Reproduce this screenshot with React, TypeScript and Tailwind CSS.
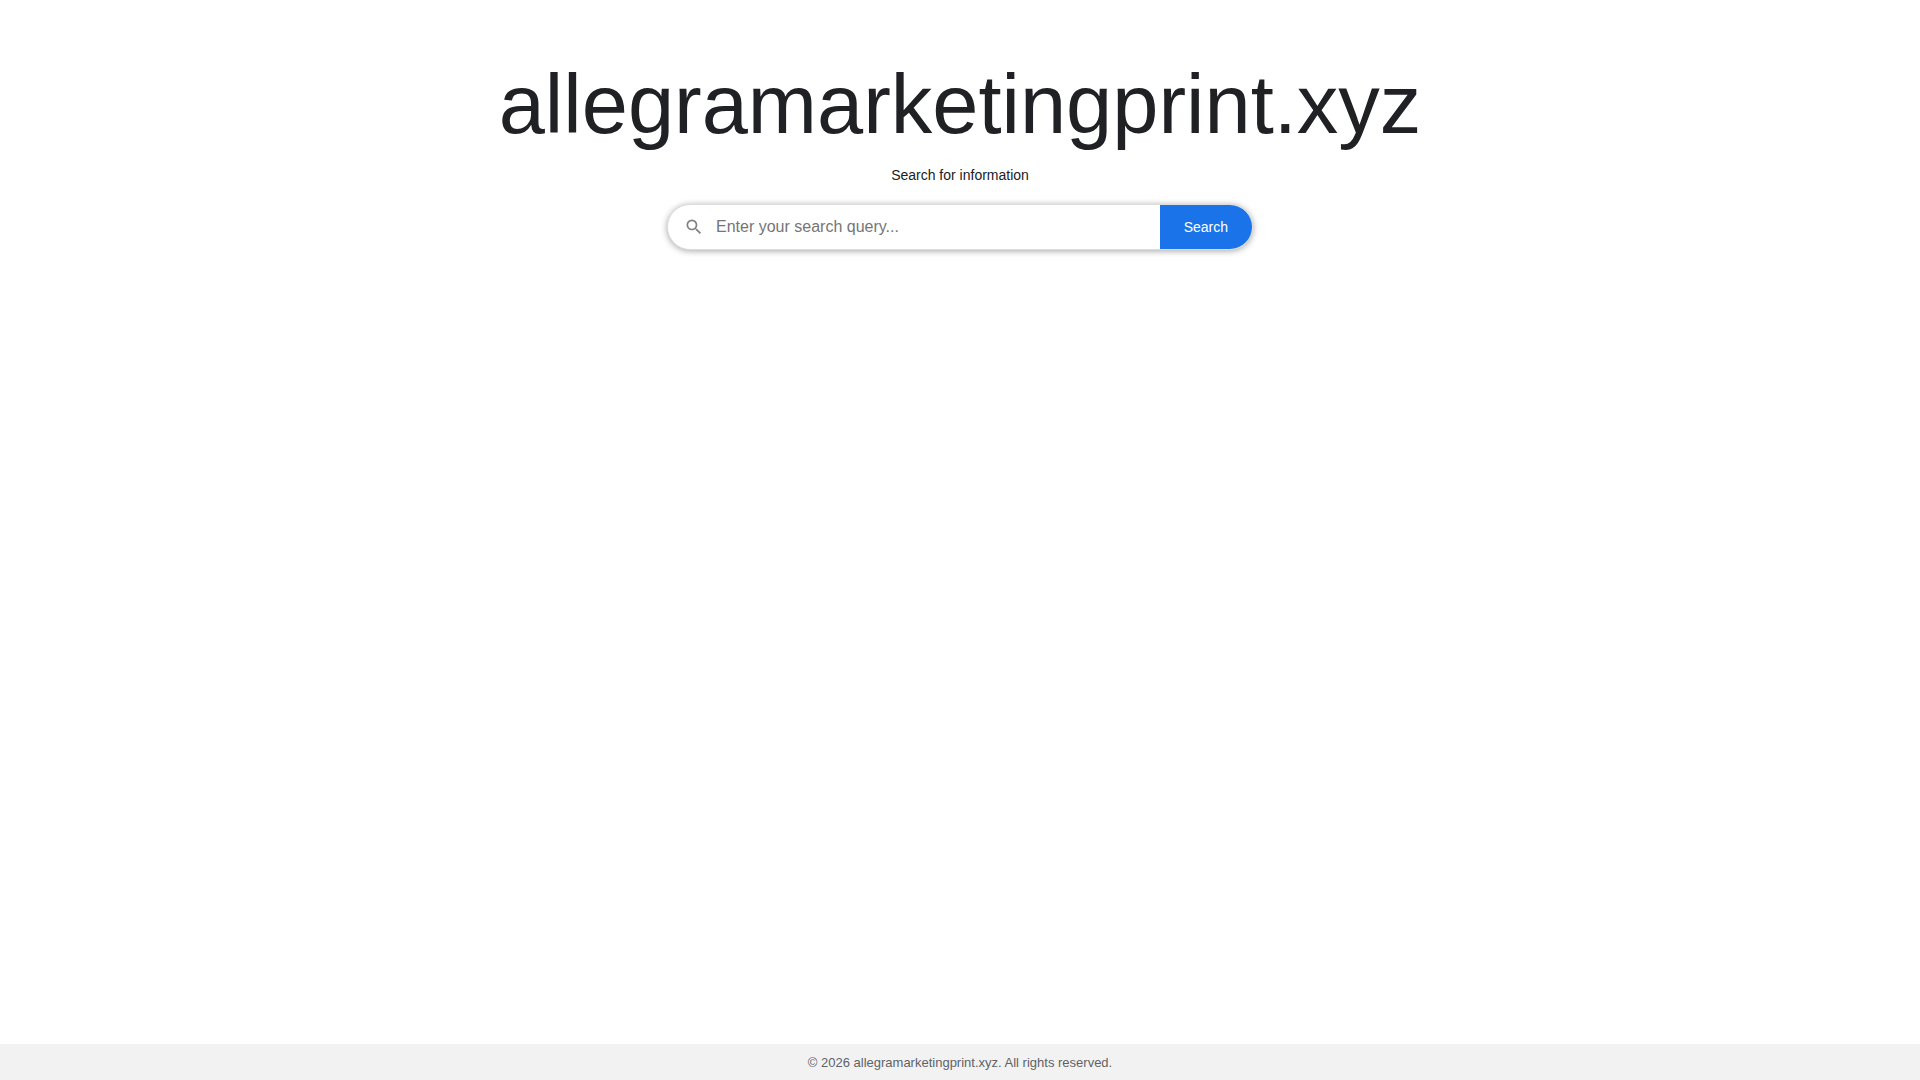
import React, { useState } from 'react';

const SITE_NAME = 'allegramarketingprint.xyz';

const SearchIcon = () => <svg className="w-5 h-5 shrink-0" viewBox="0 0 24 24" fill="#808080" aria-hidden="true">
    <path d="M15.5 14h-.79l-.28-.27A6.471 6.471 0 0 0 16 9.5 6.5 6.5 0 1 0 9.5 16c1.61 0 3.09-.59 4.23-1.57l.27.28v.79l5 4.99L20.49 19l-4.99-5zm-6 0C7.01 14 5 11.99 5 9.5S7.01 5 9.5 5 14 7.01 14 9.5 11.99 14 9.5 14z" />
  </svg>;

const SearchForm = () => {
  const [query, setQuery] = useState('');
  return <form role="search" onSubmit={e => e.preventDefault()} className="flex items-stretch w-full max-w-[586px] h-[46px] bg-white border border-[#dddddd] rounded-full shadow-[0_1px_6px_rgba(32,33,36,0.4)]">
      <label htmlFor="query" className="flex items-center pl-4 pr-3">
        <SearchIcon />
      </label>
      <input id="query" type="text" aria-label="Search query" value={query} onChange={e => setQuery(e.target.value)} placeholder="Enter your search query..." className="flex-1 min-w-0 text-base text-[#202124] placeholder:text-[#757575] outline-none" />
      <button type="submit" className="px-6 text-sm text-white bg-[#1a73e8] hover:bg-[#1765cc] rounded-r-full cursor-pointer">
        Search
      </button>
    </form>;
};

const App = () => {
  return <div className="flex flex-col min-h-screen bg-white text-[#202124] font-['Liberation_Sans',Arial,sans-serif]">
      <main className="flex-1 flex flex-col items-center px-5 pt-14">
        <h1 className="text-[83px] leading-[97px] text-center">{SITE_NAME}</h1>
        <p className="mt-3 mb-[19px] text-sm">Search for information</p>
        <SearchForm />
      </main>
      <footer className="pt-[9px] pb-2 text-center text-[13px] leading-[19px] text-[#5f6368] bg-[#f2f2f2]">
        © 2026 {SITE_NAME}. All rights reserved.
      </footer>
    </div>;
};

export default App;
